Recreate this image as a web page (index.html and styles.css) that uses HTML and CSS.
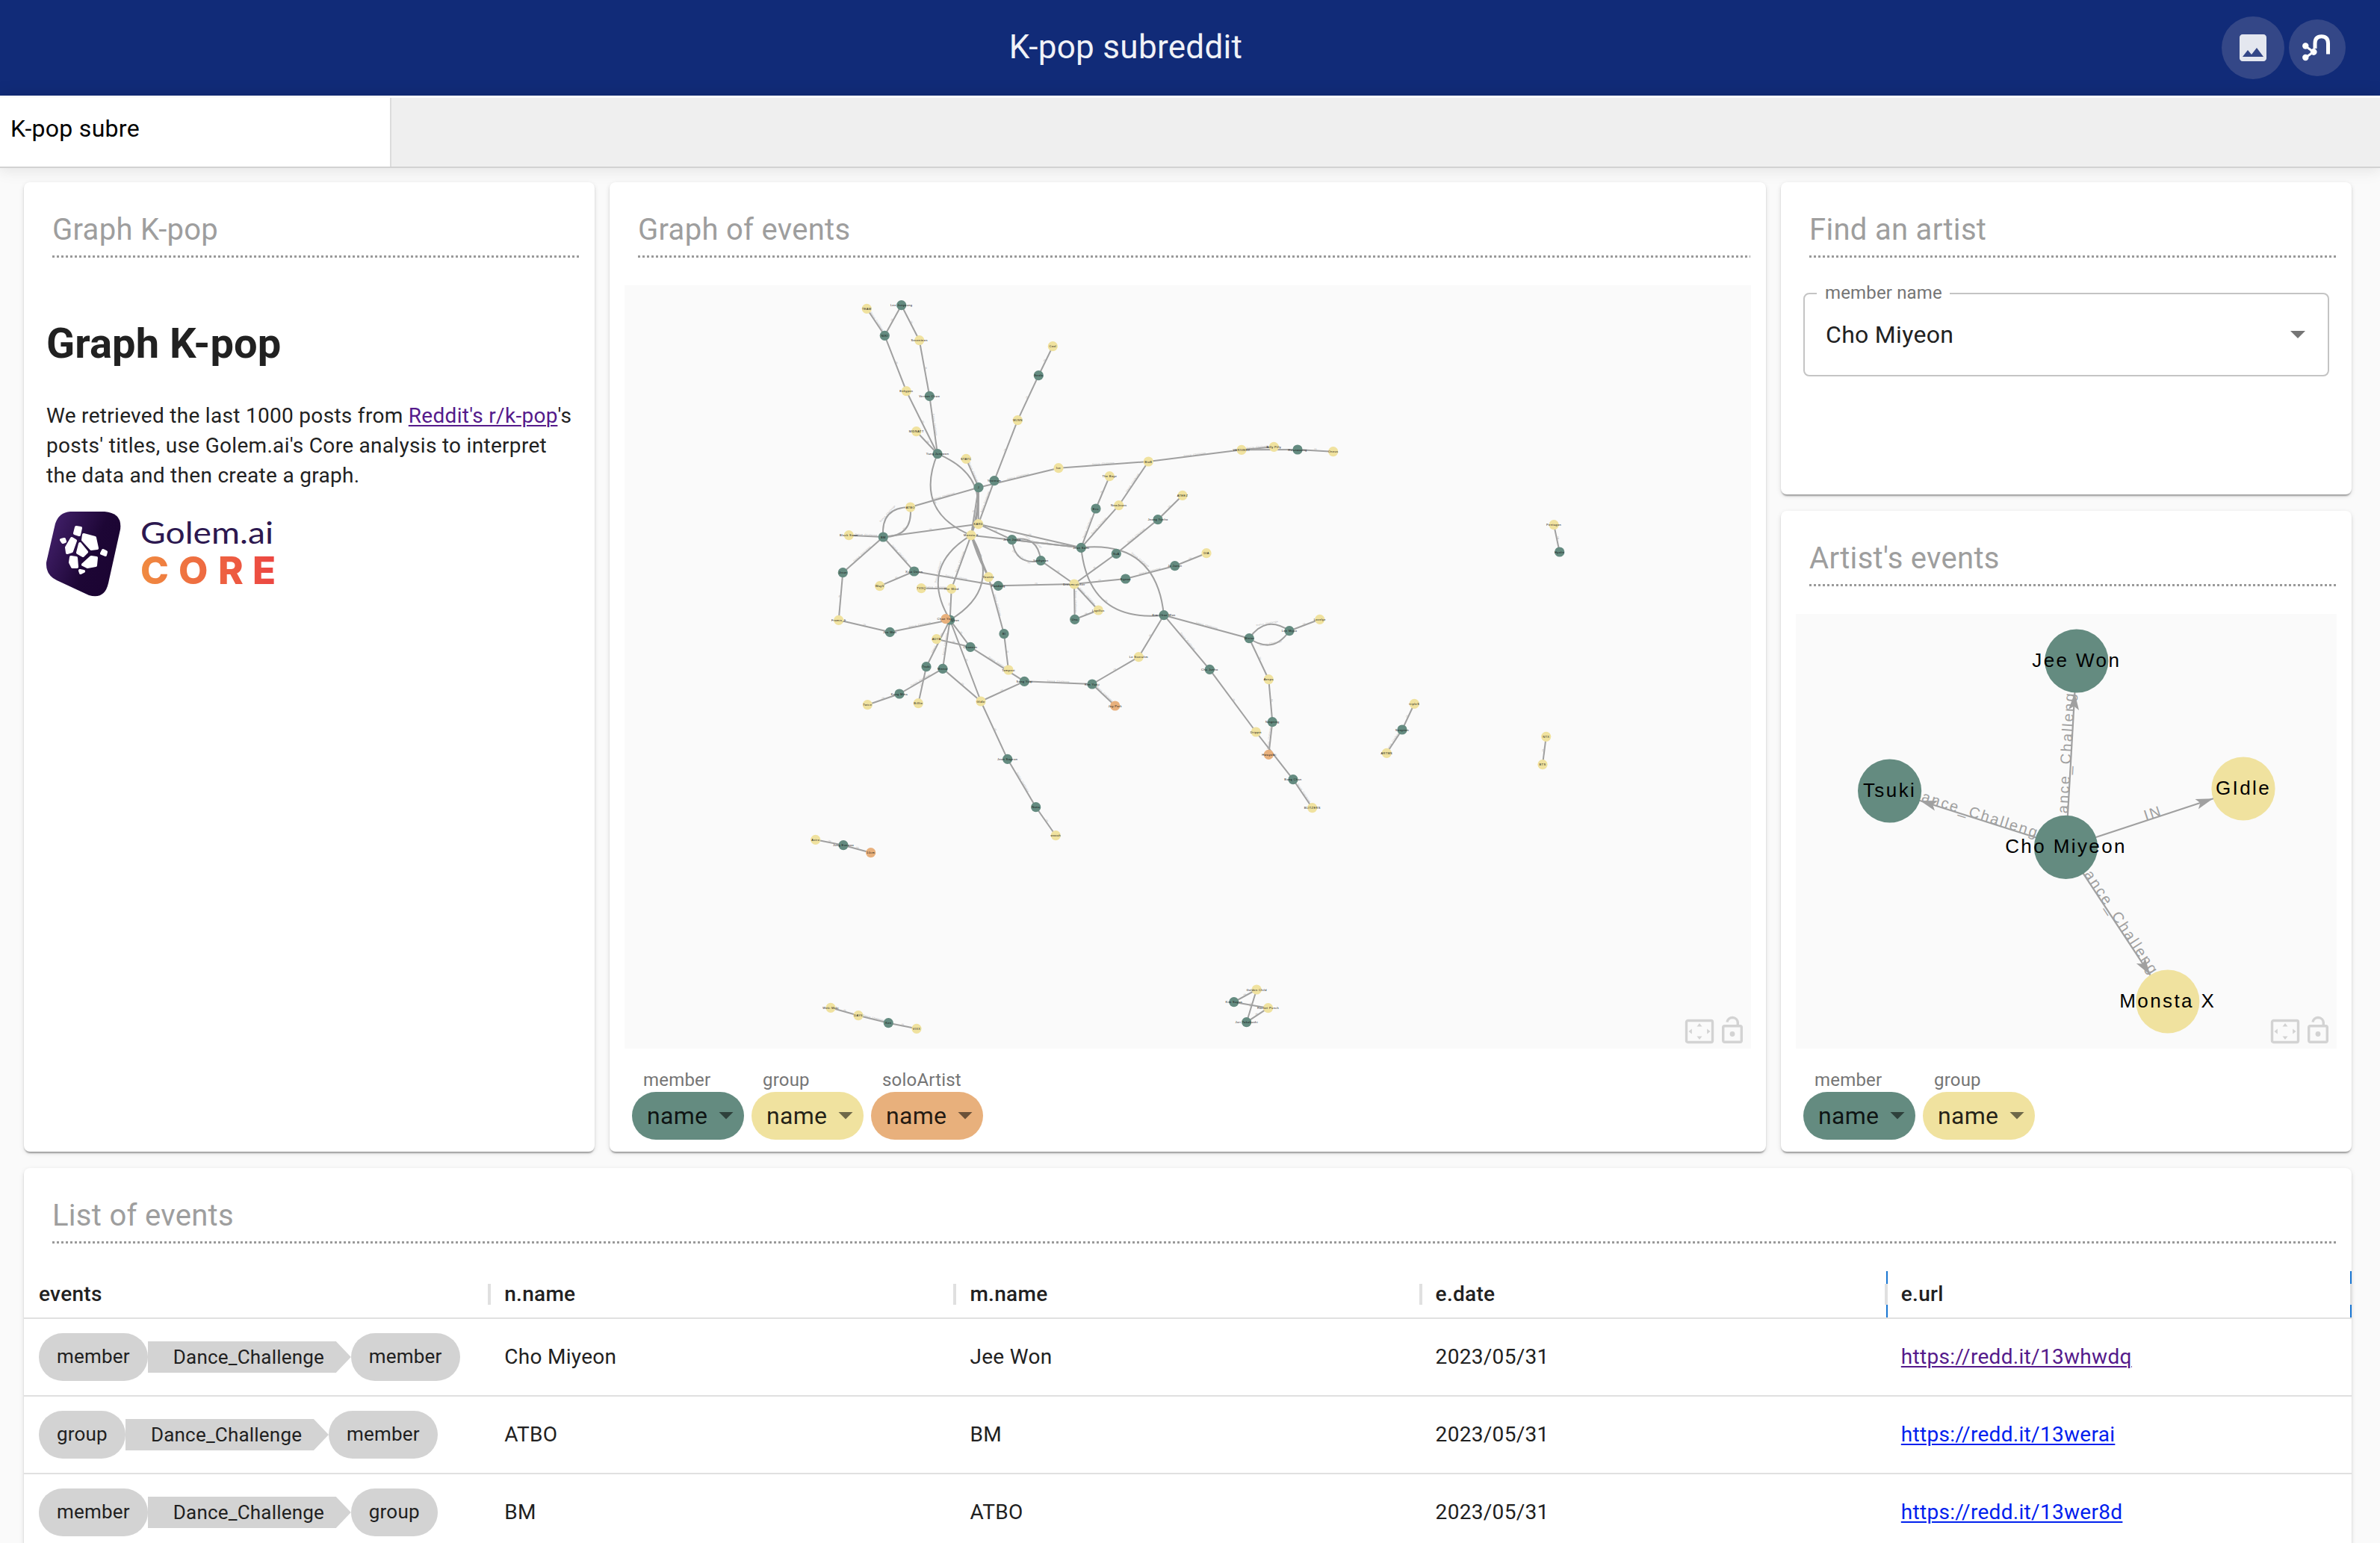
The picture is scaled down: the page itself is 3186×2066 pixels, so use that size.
FILE: index.html
```html
<!DOCTYPE html>
<html lang="en">
<head>
<meta charset="utf-8">
<title>K-pop subreddit</title>
<link rel="stylesheet" href="styles.css">
</head>
<body>
<div class="app">
  <header class="topbar">
    <h1 class="topbar-title">K-pop subreddit</h1>
    <div class="topbar-actions">
      <button class="round-btn round-btn-lg" aria-label="Screenshot">
        <svg width="48" height="48" viewBox="0 0 24 24" fill="#fff" fill-opacity=".87"><path d="M21 19V5c0-1.100-.9-2-2-2H5c-1.100 0-2 .9-2 2v14c0 1.100.9 2 2 2h14c1.100 0 2-.9 2-2zM8.500 13.500l2.500 3.010L14.500 12l4.500 6H5l3.500-4.500z"/></svg>
      </button>
      <button class="round-btn" aria-label="Neo4j">
        <svg width="40" height="38" viewBox="0 0 40 38" fill="none" stroke="#fff">
          <path d="M17 20V13Q17 3.700 25.700 3.700T34.500 13V27.500" stroke-width="5"/>
          <path d="M4.500 17L15 24.500L4.500 32" stroke-width="3"/>
          <g fill="#fff" stroke="none"><circle cx="4.300" cy="16.500" r="4.200"/><circle cx="15.200" cy="24.500" r="4.400"/><circle cx="4.300" cy="32" r="4.200"/></g>
        </svg>
      </button>
    </div>
  </header>

  <nav class="tabs"><div class="tab">K-pop subre</div></nav>

  <main class="grid">
    <section class="card card-about">
      <h2 class="card-title">Graph K-pop</h2>
      <div class="markdown">
        <h1>Graph K-pop</h1>
        <p>We retrieved the last 1000 posts from <a class="visited" href="#">Reddit's r/k-pop</a>'s posts' titles, use Golem.ai's Core analysis to interpret the data and then create a graph.</p>
        <svg class="logo" width="306" height="116" viewBox="0 0 306 116">
          <defs>
            <linearGradient id="badge" x1="0" y1="0.100" x2="1" y2=".6"><stop offset="0" stop-color="#45226f"/><stop offset=".65" stop-color="#1d0635"/><stop offset="1" stop-color="#1b0432"/></linearGradient>
            <linearGradient id="core" gradientUnits="userSpaceOnUse" x1="128" y1="0" x2="304" y2="0"><stop offset="0" stop-color="#f08a40"/><stop offset="1" stop-color="#ec4742"/></linearGradient>
          </defs>
          <path fill="url(#badge)" d="M32 0H78Q102 2 99 24L83 96Q78 118 57 112L14 92Q-1 85 0 68L12 16Q17 1 32 0Z"/>
          <g fill="#fff" stroke="#fff" stroke-width="4" stroke-linejoin="round">
            <path d="M40 21L46 22L44 31L38 29ZM20 38L24 37L25 40L22 41ZM34 36L39 39L34 53L28 55L27 48ZM50 31L65 35L68 49L60 50L49 38ZM45 43L54 54L49 59L42 55ZM33 61L40 62L41 74L35 74L32 68ZM60 61L67 62L66 72L55 74L49 71ZM76 52L80 54L79 58L74 56ZM45 79L50 80L46 82Z"/>
          </g>
          <text class="logo-name" x="126" y="43" textLength="178" lengthAdjust="spacingAndGlyphs">Golem.ai</text>
          <text class="logo-core" x="126 177 230 276" y="97" fill="url(#core)">CORE</text>
        </svg>
      </div>
    </section>

    <section class="card card-graph">
      <h2 class="card-title">Graph of events</h2>
      <div class="canvas">
        <svg id="events-graph" viewBox="836 382 1508 1022"></svg>
        <div class="canvas-tools"></div>
      </div>
      <div class="legend">
        <div class="legend-item"><span>member</span><div class="pill green">name<i class="caret"></i></div></div>
        <div class="legend-item"><span>group</span><div class="pill yellow">name<i class="caret"></i></div></div>
        <div class="legend-item"><span>soloArtist</span><div class="pill orange">name<i class="caret"></i></div></div>
      </div>
    </section>

    <section class="card card-find">
      <h2 class="card-title">Find an artist</h2>
      <div class="select">
        <span class="select-label">member name</span>
        <span>Cho Miyeon</span>
        <i class="caret"></i>
      </div>
    </section>

    <section class="card card-artist">
      <h2 class="card-title">Artist's events</h2>
      <div class="canvas">
        <svg id="artist-graph" viewBox="2404 822 724 582"></svg>
        <div class="canvas-tools"></div>
      </div>
      <div class="legend">
        <div class="legend-item"><span>member</span><div class="pill green">name<i class="caret"></i></div></div>
        <div class="legend-item"><span>group</span><div class="pill yellow">name<i class="caret"></i></div></div>
      </div>
    </section>

    <section class="card card-list">
      <h2 class="card-title">List of events</h2>
      <div class="table">
        <div class="row head"><div>events</div><div>n.name</div><div>m.name</div><div class="resizing">e.date</div><div class="resizing">e.url</div></div>
        <div class="row"><div class="path"><span class="chip">member</span><span class="rel">Dance_Challenge</span><span class="chip">member</span></div><div>Cho Miyeon</div><div>Jee Won</div><div>2023/05/31</div><div><a class="visited" href="#">https://redd.it/13whwdq</a></div></div>
        <div class="row"><div class="path"><span class="chip">group</span><span class="rel">Dance_Challenge</span><span class="chip">member</span></div><div>ATBO</div><div>BM</div><div>2023/05/31</div><div><a href="#">https://redd.it/13werai</a></div></div>
        <div class="row"><div class="path"><span class="chip">member</span><span class="rel">Dance_Challenge</span><span class="chip">group</span></div><div>BM</div><div>ATBO</div><div>2023/05/31</div><div><a href="#">https://redd.it/13wer8d</a></div></div>
      </div>
    </section>
  </main>
</div>
<script src="graph.js"></script>
</body>
</html>
```
FILE: styles.css
```css
* { box-sizing: border-box; }
body {
  margin: 0;
  background: #fafafa;
  color: #212121;
  font: 28px/40px Roboto, "Liberation Sans", sans-serif;
  letter-spacing: .3px;
}
h1, h2, p { margin: 0; font-weight: 400; }
a { color: #0020ee; text-decoration-thickness: 2px; text-underline-offset: 3px; }
a.visited { color: #551a8b; }

.app { height: 2066px; overflow: hidden; display: flex; flex-direction: column; }

.topbar { flex: none; height: 128px; background: #112b78; display: flex; align-items: center; padding-right: 46px; }
.topbar-title { flex: 1; text-align: center; font-size: 44px; line-height: 56px; color: #f0f2f7; padding-bottom: 2px; }
.topbar-actions { width: 166px; margin-left: -40px; display: flex; align-items: center; gap: 6px; }
.round-btn {
  flex: none; width: 76px; height: 76px; border: 0; border-radius: 50%; padding: 0;
  background: #344787; display: flex; align-items: center; justify-content: center;
}
.round-btn-lg { width: 84px; height: 84px; }

.tabs {
  flex: none; height: 97px; border-top: 3px solid #fbfbfb; border-bottom: 2px solid #d2d2d2;
  background: #efefef; box-shadow: 0 0 20px 2px rgba(0, 0, 0, .1); display: flex;
}
.tab { width: 524px; background: #fff; border-right: 2px solid #dcdcdc; padding: 21px 14px; font-size: 32px; line-height: 40px; color: #000; }

.grid {
  flex: 1; margin-top: 19px; padding: 0 38px 0 32px;
  display: grid; gap: 22px 20px;
  grid-template-columns: 764px 1548px 764px;
  grid-template-rows: 418px 858px 620px;
}
.card {
  background: #fff; border-radius: 8px; padding-top: 40px; overflow: hidden;
  box-shadow: 0 4px 2px -2px rgba(0, 0, 0, .2), 0 2px 2px rgba(0, 0, 0, .14), 0 2px 6px rgba(0, 0, 0, .12);
}
.card-about { grid-area: 1 / 1 / 3 / 2; }
.card-graph { grid-area: 1 / 2 / 3 / 3; }
.card-find { grid-area: 1 / 3; }
.card-artist { grid-area: 2 / 3; }
.card-list { grid-area: 3 / 1 / 4 / 4; }

.card-title {
  margin: 0 21px 0 38px; padding-bottom: 13px;
  font-size: 40px; line-height: 48px; color: #9e9e9e;
  background: repeating-linear-gradient(90deg, #9a9a9a 0 3px, transparent 3px 6px) left bottom / 100% 3px no-repeat;
}

.markdown { padding: 83px 30px 0; }
.markdown h1 { font-size: 56px; line-height: 64px; font-weight: 700; letter-spacing: .1px; }
.markdown p { margin: 45px 0 28px; width: 705px; }
.logo { display: block; overflow: visible; }
.logo-name { font: 400 40px Lato, sans-serif; fill: #2c1850; letter-spacing: 0; }
.logo-core { font-weight: 800; font-size: 51px; letter-spacing: 0; }

.canvas { position: relative; margin: 37px 20px 0; background: #fafafa; }
.canvas > svg { display: block; width: 100%; }
.card-graph .canvas { height: 1022px; }
.card-artist .canvas { height: 582px; }
.canvas-tools { position: absolute; right: 10px; bottom: 6px; display: flex; gap: 9px; align-items: flex-end; }
.canvas-tools svg { display: block; }

.legend { display: flex; gap: 10px; padding: 30px 30px 0; }
.legend-item { width: 150px; }
.legend-item span { display: block; padding-left: 15px; font-size: 24px; line-height: 24px; color: #757575; letter-spacing: .2px; }
.pill { height: 64px; margin-top: 4px; padding: 0 14px 1px 20px; border-radius: 32px; font-size: 32px; display: flex; align-items: center; justify-content: space-between; color: rgba(0, 0, 0, .87); }
.green { background: #648b80; }
.yellow { background: #f0e29f; }
.orange { background: #e8b07c; }
.caret { width: 20px; height: 10px; background: rgba(0, 0, 0, .54); clip-path: polygon(0 0, 100% 0, 50% 100%); }

.select {
  position: relative; height: 112px; margin: 47px 30px 0; padding: 0 30px 0 28px;
  border: 2px solid #c4c4c4; border-radius: 8px; font-size: 32px;
  display: flex; align-items: center; justify-content: space-between;
}
.select-label { position: absolute; left: 16px; top: -15px; padding: 0 10px 0 11px; background: #fff; color: #757575; font-size: 24px; line-height: 26px; letter-spacing: .15px; }

.table { margin-top: 37px; }
.row { display: grid; grid-template-columns: repeat(5, 1fr); height: 104px; border-bottom: 2px solid #e0e0e0; align-items: center; }
.row > div { padding: 0 20px; }
.head { height: 64px; font-weight: 500; align-items: stretch; line-height: 62px; }
.row.head > div { position: relative; }
.head > div::after { content: ""; position: absolute; right: -2px; top: 17px; width: 4px; height: 28px; background: #e0e0e0; }
.head > .resizing::before { content: ""; position: absolute; right: -2px; top: 0; width: 2px; height: 62px; background: #1976d2; }
.head > .resizing:last-child::before { right: 0; }
.row > .path { display: flex; align-items: center; font-size: 26px; letter-spacing: .2px; }
.chip { height: 64px; line-height: 63px; padding: 0 24px; border-radius: 32px; background: #d3d3d3; }
.rel { height: 42px; line-height: 42px; width: 272px; padding-left: 34px; background: #d3d3d3; clip-path: polygon(0 0, 252px 0, 100% 50%, 252px 100%, 0 100%); }

.edge { fill: none; stroke: #a0a0a0; }
.dot-g { fill: #648b80; }
.dot-y { fill: #f0e29f; }
.dot-o { fill: #e8b07c; }
svg text { font-family: "Liberation Sans", Arial, sans-serif; }
svg text.logo-name { font-family: Lato, sans-serif; }
svg text.logo-core { font-family: Inter, sans-serif; }
.node-label { text-anchor: middle; fill: #000; }
.edge-label { text-anchor: middle; fill: #a0a0a0; }
#events-graph .edge { stroke-width: 2px; }
#events-graph .node-label { font-size: 4px; letter-spacing: .36px; fill: #111; }
#events-graph .edge-label { font-size: 3.2px; letter-spacing: .3px; fill: #b0b0b0; }
#artist-graph .edge { stroke-width: 2.2px; }
#artist-graph .node-label { font-size: 26px; letter-spacing: 2.4px; }
#artist-graph .edge-label { font-size: 20px; letter-spacing: 2.3px; }
.arrow { fill: #a0a0a0; }
```
FILE: graph.js
```js
const NS = 'http://www.w3.org/2000/svg';

function add(parent, tag, attrs, text) {
  const el = document.createElementNS(NS, tag);
  for (const k in attrs) el.setAttribute(k, attrs[k]);
  if (text) el.textContent = text;
  parent.appendChild(el);
  return el;
}

// node: id -> [x, y, kind, label]
// edge: [from, to, bend, label]; bend is the control point offset as a share of the length
function draw(svg, nodes, edges, opt) {
  const lines = add(svg, 'g', {});
  for (const [a, b, bend = 0, label = 'IN'] of edges) {
    const [x1, y1] = nodes[a];
    const [x2, y2] = nodes[b];
    const dx = x2 - x1, dy = y2 - y1, len = Math.hypot(dx, dy);
    const cx = (x1 + x2) / 2 - dy * bend, cy = (y1 + y2) / 2 + dx * bend;
    add(lines, 'path', { class: 'edge', d: `M${x1} ${y1}Q${cx} ${cy} ${x2} ${y2}` });
    const mx = (x1 + x2) / 2 - dy * bend / 2, my = (y1 + y2) / 2 + dx * bend / 2;
    let angle = Math.atan2(dy, dx) * 180 / Math.PI;
    if (opt.arrow) {
      const r = opt.radius;
      add(lines, 'path', { class: 'arrow', d: 'M0 0L-23 -7L-18 0L-23 7Z', transform: `translate(${x2 - dx / len * r} ${y2 - dy / len * r}) rotate(${angle})` });
    }
    if (angle > 90) angle -= 180;
    if (angle < -90) angle += 180;
    add(lines, 'text', { class: 'edge-label', y: -opt.lift, transform: `translate(${mx} ${my}) rotate(${angle})` }, label);
  }
  for (const id in nodes) {
    const [x, y, kind, label = id] = nodes[id];
    add(svg, 'circle', { class: 'dot-' + kind, cx: x, cy: y, r: opt.radius });
    add(svg, 'text', { class: 'node-label', x, y: y + opt.drop }, label);
  }
}

const D = 'Dance_Challenge';

const events = {
  TEAM: [1160.3, 413.3, 'y'], 'Lee Junyoung': [1206.7, 408.7, 'g'], NIKI: [1184.3, 449.3, 'g'],
  Seventeen: [1230.7, 455.7, 'y'], Enhypen: [1213.3, 523.7, 'y'], 'Vernon Chwe': [1244.3, 530.3, 'g'],
  MIDNATT: [1226.7, 577.7, 'y'], 'Yang Jungwon': [1255, 607.7, 'g'], STAYC: [1293.3, 614.3, 'y'],
  Cool: [1409.3, 463.7, 'y'], Seola: [1390.3, 502.7, 'g'], WJSN: [1362.3, 562.7, 'y'],
  Yeoreum: [1331, 643.7, 'g'], J: [1310, 652.7, 'g'], Ive: [1417, 626.7, 'y'], BtoB: [1537.3, 618, 'y'],
  'The Boyz': [1485.3, 637.7, 'y'], NewJeans: [1497.7, 676.7, 'y'], Eric: [1467, 681, 'g'],
  'Jeong Yunho': [1550, 695.7, 'g'], ATBO: [1218.7, 679, 'y'], BM: [1182.3, 719, 'g'],
  'Black Swan': [1136.3, 716.7, 'y'], KARD: [1309.7, 701.7, 'y'], 'Monsta X': [1300, 716.7, 'y'],
  'Jeon Jiwoo': [1354.7, 722.7, 'g'], Yoohyeon: [1393.3, 750.7, 'g'], 'Jeon Somi': [1447.3, 733.3, 'g'],
  SuA: [1494.3, 741.3, 'g'], Dreamcatcher: [1438, 782, 'y'], Siyeon: [1506.7, 775, 'g'],
  Jisun: [1128.3, 766.7, 'g'], 'Xiao Dejun': [1223.7, 765, 'g'], WayV: [1177.7, 784.7, 'y'],
  TVXQ: [1233.3, 787.7, 'y'], 'The Wind': [1273.7, 788.3, 'y'], Younite: [1323.3, 772.7, 'y'],
  Handong: [1336.3, 784.3, 'g'], 'Fromis_9': [1122.7, 830.3, 'y'], 'Jee Won': [1191.3, 846.3, 'g'],
  'Cho Miyeon': [1271.7, 830, 'g'], 'Chae Yeon': [1266, 828.7, 'o'], ADYA: [1253.7, 855.7, 'y'],
  Chaeeun: [1299, 866.3, 'g'], BI: [1344, 848.7, 'g'], Tempest: [1350, 897, 'y'],
  Tsuki: [1240, 892.7, 'g'], Minnie: [1262, 895.3, 'g'], 'Kang Mina': [1204, 929, 'g'],
  Twice: [1161.3, 943.7, 'y'], Billlie: [1229.3, 941.7, 'y'], GIdle: [1313, 939, 'y'],
  'Song Yuqi': [1371.3, 912.3, 'g'], 'Kim Yunji': [1462, 916, 'g'], 'Le Sserafim': [1524.3, 879.7, 'y'],
  'Jay Park': [1492.7, 945, 'o'], Lapillus: [1470.3, 817, 'y'], Una: [1438.7, 829.3, 'g'],
  'Jeon Soyeon': [1348.7, 1016.3, 'g'], Nana: [1386.7, 1080.7, 'g'], wooah: [1413.3, 1118.7, 'y'],
  Astro: [1091.7, 1124.3, 'y'], 'Jung Eunwoo': [1129, 1131.7, 'g'], '10cm': [1165.7, 1141.7, 'o'],
  VERIVERY: [1662, 602.3, 'y'], 'Billy Pilly': [1705.3, 598.3, 'y'], Hwanwoong: [1737, 602, 'g'],
  Oneus: [1784.7, 604.7, 'y'], ATEEZ: [1583, 663.3, 'y'], 'Jo Jaeun': [1572.7, 757.7, 'g'],
  DIA: [1615, 740.7, 'y'], 'Kim Chae Won': [1558, 823.7, 'g'], Winter: [1672.3, 854.7, 'g'],
  'Lee Mijoo': [1726, 844.7, 'g'], Lovelyz: [1766.7, 829.3, 'y'], 'Cha Junho': [1619.3, 896.3, 'g'],
  Aespa: [1698.3, 909.7, 'y'], Ningning: [1703.3, 966.7, 'g'], Drippin: [1681.3, 980, 'y'],
  Hwayobi: [1698.3, 1010.3, 'o'], 'Bang Chan': [1731, 1043.7, 'g'], BLITZERS: [1756.7, 1081.7, 'y'],
  tripleS: [1893.3, 942.3, 'y'], Seoyeon: [1877, 977, 'g'], ARTMS: [1856.3, 1008.3, 'y'],
  'Weki Meki': [1112, 1349.3, 'y'], DAY6: [1149, 1359.7, 'y'], Ken: [1189.3, 1369.7, 'g'],
  VIXX: [1227, 1377.3, 'y'], 'Golden Child': [1682.2, 1325, 'y'], 'Kim Suyun': [1651.8, 1341.7, 'g'],
  'Rocket Punch': [1697.6, 1349.7, 'y'], 'Juri Takahashi': [1668.7, 1368.7, 'g'],
  Pentagon: [2080.1, 702.7, 'y'], Hyolin: [2087.7, 739, 'g'], NTX: [2069.7, 986.3, 'y'], BTS: [2065, 1023.6, 'y']
};

draw(document.getElementById('events-graph'), events, [
  ['TEAM', 'NIKI', 0, D], ['Lee Junyoung', 'NIKI'], ['Lee Junyoung', 'Seventeen'], ['Seventeen', 'Vernon Chwe'],
  ['NIKI', 'Enhypen'], ['Enhypen', 'Yang Jungwon'], ['Vernon Chwe', 'Yang Jungwon', 0, D], ['MIDNATT', 'Yang Jungwon'],
  ['Yang Jungwon', 'Monsta X', .5], ['Yang Jungwon', 'Monsta X', -.5], ['STAYC', 'J', 0, D], ['Cool', 'Seola'],
  ['Seola', 'WJSN'], ['WJSN', 'Yeoreum'], ['Yeoreum', 'KARD', 0, D], ['J', 'Ive', 0, D], ['J', 'ATBO', 0, D],
  ['J', 'KARD'], ['J', 'Monsta X'], ['J', 'Monsta X', -.08], ['Ive', 'BtoB', 0, D], ['BtoB', 'VERIVERY', 0, D],
  ['BtoB', 'NewJeans', 0, D], ['NewJeans', 'Jeon Somi', 0, D], ['The Boyz', 'Eric'], ['Eric', 'Jeon Somi', 0, D],
  ['ATEEZ', 'Jeong Yunho'], ['Jeong Yunho', 'SuA', 0, D], ['SuA', 'Dreamcatcher'], ['Yoohyeon', 'Dreamcatcher'],
  ['Siyeon', 'Dreamcatcher'], ['Handong', 'Dreamcatcher'], ['Siyeon', 'Jo Jaeun', 0, D], ['Jo Jaeun', 'DIA'],
  ['Dreamcatcher', 'Una', 0, D], ['Dreamcatcher', 'Lapillus', 0, D], ['Una', 'Lapillus'], ['KARD', 'BM'],
  ['ATBO', 'BM', .55, D], ['ATBO', 'BM', -.55], ['Black Swan', 'BM', 0, D], ['BM', 'Jisun', 0, D],
  ['BM', 'Xiao Dejun', 0, D], ['Xiao Dejun', 'WayV'], ['Xiao Dejun', 'Handong', 0, D], ['TVXQ', 'The Wind', 0, D],
  ['Monsta X', 'The Wind', 0, D], ['Monsta X', 'Younite'], ['Monsta X', 'Younite', .06], ['Younite', 'BI', 0, D],
  ['Monsta X', 'Cho Miyeon', .5, D], ['Monsta X', 'Cho Miyeon', -.5], ['KARD', 'Jeon Jiwoo'], ['KARD', 'Jeon Somi'],
  ['Monsta X', 'Jeon Somi'], ['Jeon Jiwoo', 'Jeon Somi'], ['Jeon Jiwoo', 'Yoohyeon', -.55, D],
  ['Jeon Jiwoo', 'Yoohyeon', .55, D], ['Jeon Somi', 'Kim Chae Won', -.5, D], ['Jeon Somi', 'Kim Chae Won', .5],
  ['The Wind', 'Cho Miyeon'], ['Jisun', 'Fromis_9'], ['Fromis_9', 'Jee Won'], ['Jee Won', 'Cho Miyeon', 0, D],
  ['Cho Miyeon', 'Tsuki', 0, D], ['ADYA', 'Chaeeun'], ['Cho Miyeon', 'Chaeeun'], ['Chaeeun', 'Song Yuqi', 0, D],
  ['BI', 'Tempest'], ['Cho Miyeon', 'Minnie', 0, D], ['Cho Miyeon', 'GIdle'], ['Minnie', 'GIdle'],
  ['Minnie', 'Kang Mina', 0, D], ['Kang Mina', 'Twice'], ['Tsuki', 'Billlie'], ['Song Yuqi', 'GIdle'],
  ['Song Yuqi', 'Kim Yunji', 0, D], ['Kim Yunji', 'Le Sserafim'], ['Kim Yunji', 'Jay Park', 0, D],
  ['Le Sserafim', 'Kim Chae Won'], ['Kim Chae Won', 'Cha Junho', 0, D], ['Kim Chae Won', 'Winter', 0, D],
  ['Cha Junho', 'Drippin'], ['Drippin', 'Bang Chan'], ['Bang Chan', 'BLITZERS', 0, D], ['Winter', 'Lee Mijoo', -.5, D],
  ['Winter', 'Lee Mijoo', .5, D], ['Winter', 'Aespa'], ['Aespa', 'Ningning'], ['Ningning', 'Hwayobi', 0, D],
  ['Lee Mijoo', 'Lovelyz'], ['GIdle', 'Jeon Soyeon'], ['Jeon Soyeon', 'Nana', 0, D], ['Nana', 'wooah'],
  ['Astro', 'Jung Eunwoo'], ['Jung Eunwoo', '10cm'], ['tripleS', 'Seoyeon'], ['Seoyeon', 'ARTMS', 0, D],
  ['Weki Meki', 'DAY6'], ['DAY6', 'Ken', 0, D], ['Ken', 'VIXX'], ['Golden Child', 'Kim Suyun'],
  ['Golden Child', 'Juri Takahashi'], ['Kim Suyun', 'Rocket Punch'], ['Juri Takahashi', 'Rocket Punch'],
  ['VERIVERY', 'Billy Pilly', 0, D], ['VERIVERY', 'Hwanwoong'], ['Hwanwoong', 'Oneus'], ['Pentagon', 'Hyolin'], ['NTX', 'BTS']
], { radius: 6.6, lift: .8, drop: 1.5 });

draw(document.getElementById('artist-graph'), {
  'Jee Won': [2779.8, 885, 'g'], Tsuki: [2529.6, 1059, 'g'], GIdle: [3003, 1056, 'y'],
  'Monsta X': [2901.8, 1341, 'y'], 'Cho Miyeon': [2765.5, 1134.3, 'g']
}, [
  ['Cho Miyeon', 'Jee Won', 0, D], ['Cho Miyeon', 'Tsuki', 0, D],
  ['Cho Miyeon', 'GIdle', 0, 'IN'], ['Cho Miyeon', 'Monsta X', 0, D]
], { radius: 42.6, lift: 0, drop: 8, arrow: true });

// fit-to-view and unlocked-layout buttons in the corner of each canvas
for (const box of document.querySelectorAll('.canvas-tools')) {
  const fit = add(box, 'svg', { width: 40, height: 34, viewBox: '0 0 40 34' });
  add(fit, 'rect', { x: 2.5, y: 2.5, width: 35, height: 29, rx: 2, fill: 'none', stroke: '#d3d3d3', 'stroke-width': 3.4 });
  add(fit, 'path', { fill: '#d3d3d3', d: 'M20 6L23.500 10.500H16.500ZM20 28L23.500 23.500H16.500ZM5.500 17L9.800 13.500V20.500ZM34.500 17L30.200 13.500V20.500Z' });
  const lock = add(box, 'svg', { width: 30, height: 39, viewBox: '0 0 30 39' });
  add(lock, 'rect', { x: 2.7, y: 14.7, width: 24.6, height: 21.6, rx: 2, fill: 'none', stroke: '#d3d3d3', 'stroke-width': 3.4 });
  add(lock, 'path', { fill: 'none', stroke: '#d3d3d3', 'stroke-width': 3.4, d: 'M8 9.500A7.200 7 0 0 1 22.300 10V14' });
  add(lock, 'circle', { cx: 15, cy: 25.5, r: 3.4, fill: '#d3d3d3' });
}
```
